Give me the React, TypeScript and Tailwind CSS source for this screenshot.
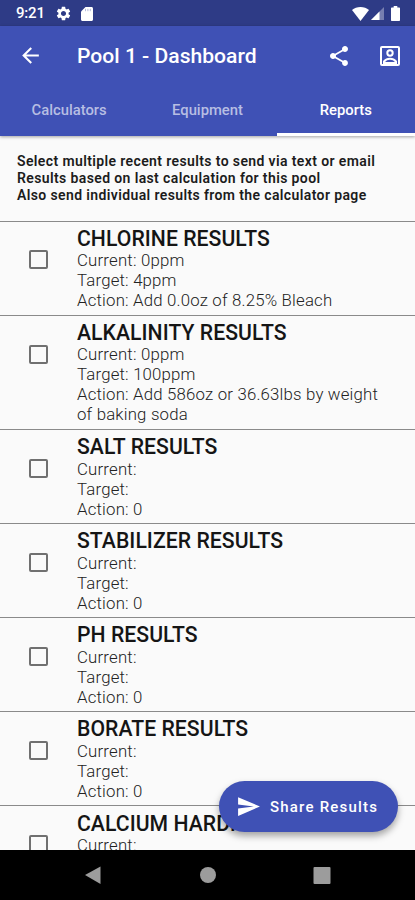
import React, { useState } from 'react';
import { MdArrowBack, MdSend, MdSettings, MdShare } from 'react-icons/md';

interface Result {
  title: string;
  current: string;
  target: string;
  action: string;
}

const results: Result[] = [
  { title: 'CHLORINE RESULTS', current: '0ppm', target: '4ppm', action: 'Add 0.0oz of 8.25% Bleach' },
  { title: 'ALKALINITY RESULTS', current: '0ppm', target: '100ppm', action: 'Add 586oz or 36.63lbs by weight of baking soda' },
  { title: 'SALT RESULTS', current: '', target: '', action: '0' },
  { title: 'STABILIZER RESULTS', current: '', target: '', action: '0' },
  { title: 'PH RESULTS', current: '', target: '', action: '0' },
  { title: 'BORATE RESULTS', current: '', target: '', action: '0' },
  { title: 'CALCIUM HARDNESS', current: '', target: '', action: '0' },
];

const tabs = ['Calculators', 'Equipment', 'Reports'];

const StatusBar: React.FC = () => (
  <div className="flex h-[26px] shrink-0 items-center bg-[#2e3b86] pl-4 pr-[15px] pt-px text-white">
    <span className="w-[39px] text-[15px] font-medium leading-none tracking-[-0.2px]">9:21</span>
    <MdSettings size={17} />
    <svg className="ml-[9px]" width="12" height="14" viewBox="0 0 12 14" fill="currentColor">
      <path d="M4.5 0H10.5C11.3 0 12 .7 12 1.5V12.5C12 13.3 11.3 14 10.5 14H1.5C.7 14 0 13.3 0 12.5V4.5Z" />
      <path d="M4.5 1.8v2.4M6.9 1.8v2.4M9.3 1.8v2.4" stroke="#b5bada" strokeWidth="1" />
    </svg>
    <svg className="ml-auto" width="17" height="14" viewBox="0 0 17 14" fill="currentColor">
      <path d="M8.5 14L0 3C2.3 1.1 5.2 0 8.5 0S14.7 1.1 17 3Z" />
    </svg>
    <svg className="ml-[2px]" width="13" height="13" viewBox="0 0 13 13" fill="currentColor">
      <path d="M13 0V13H0Z" fillOpacity="0.35" />
      <path d="M8.5 4.5V13H0Z" />
    </svg>
    <svg className="ml-[7px]" width="9" height="15" viewBox="0 0 9 15" fill="currentColor">
      <path d="M2.7 0H6.3V1.5H8C8.6 1.5 9 1.9 9 2.5V14C9 14.6 8.6 15 8 15H1C.4 15 0 14.6 0 14V2.5C0 1.9.4 1.5 1 1.5H2.7Z" />
    </svg>
  </div>
);

const AccountIcon: React.FC = () => (
  <svg className="ml-[29px]" width="20" height="20" viewBox="0 0 20 20" fill="none" stroke="currentColor" strokeWidth="2">
    <rect x="1" y="1" width="18" height="18" rx="1" />
    <circle cx="10" cy="7" r="2.7" />
    <path d="M4 18V15.5C5.4 13.8 7.6 12.8 10 12.8S14.6 13.8 16 15.5V18" />
    <path d="M5 17H15" />
  </svg>
);

const ResultRow: React.FC<{ result: Result; checked: boolean; onToggle: () => void }> = ({ result, checked, onToggle }) => (
  <div className="flex border-t-[1.5px] border-[#8a8a8a] pb-[4.7px] pr-[30px] pt-[5.1px]">
    <button
      type="button"
      role="checkbox"
      aria-checked={checked}
      aria-label={result.title}
      onClick={onToggle}
      className={`ml-[29px] mt-[23.4px] size-[19px] shrink-0 rounded-[2px] border-2 border-[#707070] ${checked ? 'bg-[#3f51b5]' : ''}`}
    />
    <div className="ml-[29px] text-[16.8px] font-light leading-[20px] tracking-[0.19px] text-[#222222]">
      <h2 className="text-[21.2px] font-medium leading-[23.3px] tracking-[0.04px] text-[#151515]">{result.title}</h2>
      <p>Current: {result.current}</p>
      <p>Target: {result.target}</p>
      <p>Action: {result.action}</p>
    </div>
  </div>
);

const App: React.FC = () => {
  const [activeTab, setActiveTab] = useState('Reports');
  const [selected, setSelected] = useState<string[]>([]);

  const toggle = (title: string) => {
    setSelected((prev) => (prev.includes(title) ? prev.filter((t) => t !== title) : [...prev, title]));
  };

  return (
    <div className="flex h-[900px] w-[415px] flex-col overflow-hidden bg-[#fafafa] font-[Roboto,sans-serif]">
      <StatusBar />
      <header className="relative z-10 shrink-0 bg-[#3f51b5] text-white shadow-[0_1px_3px_rgba(0,0,0,0.35)]">
        <div className="flex h-[59px] items-center pl-[18px] pr-[15px]">
          <MdArrowBack size={25} />
          <h1 className="ml-[34px] pt-px text-[21.1px] font-medium">Pool 1 - Dashboard</h1>
          <MdShare size={24} className="ml-auto" />
          <AccountIcon />
        </div>
        <nav className="flex h-[51px]">
          {tabs.map((tab) => (
            <button
              key={tab}
              type="button"
              onClick={() => setActiveTab(tab)}
              className={`flex-1 border-b-[3px] pt-[2px] text-[14.8px] font-medium ${activeTab === tab ? 'border-white text-white' : 'border-transparent text-[#b7bee3]'}`}
            >
              {tab}
            </button>
          ))}
        </nav>
      </header>

      <main className="relative min-h-0 flex-1 overflow-hidden">
        <div className="h-[85px] pl-[17px] pt-[17px] text-[14px] font-semibold leading-[17px] tracking-[0.38px] text-[#1c1c1c]">
          <p>Select multiple recent results to send via text or email</p>
          <p>Results based on last calculation for this pool</p>
          <p>Also send individual results from the calculator page</p>
        </div>
        {results.map((result) => (
          <ResultRow
            key={result.title}
            result={result}
            checked={selected.includes(result.title)}
            onToggle={() => toggle(result.title)}
          />
        ))}
        <button
          type="button"
          className="absolute bottom-[18px] right-[17px] flex h-[51px] w-[179px] items-center rounded-full bg-[#3f51b5] pl-[17px] text-[15px] font-medium tracking-[1.2px] text-white shadow-[0_4px_7px_rgba(0,0,0,0.35)]"
        >
          <MdSend size={25} />
          <span className="ml-[9px] whitespace-nowrap pt-px">Share Results</span>
        </button>
      </main>

      <footer className="h-[50px] shrink-0 bg-black">
        <svg width="415" height="50" viewBox="0 0 415 50" fill="#9c9c9c">
          <path d="M85 25L100.5 16.5V34Z" />
          <circle cx="208" cy="25" r="8" />
          <rect x="313.5" y="17" width="17" height="17" rx="1" />
        </svg>
      </footer>
    </div>
  );
};

export default App;
